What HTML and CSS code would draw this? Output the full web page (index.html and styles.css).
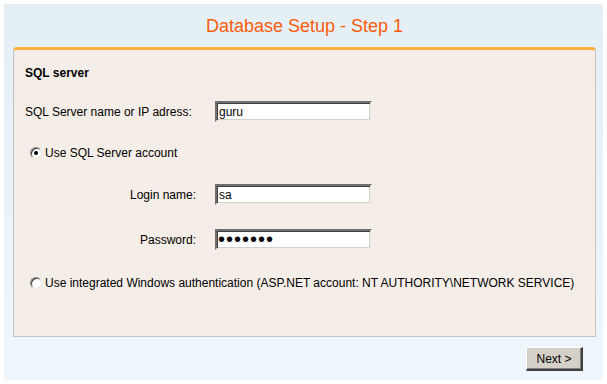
FILE: index.html
```html
<!DOCTYPE html>
<html lang="en">
<head>
  <meta charset="UTF-8" />
  <title>Database Setup - Step 1</title>
  <link rel="stylesheet" href="styles.css">
</head>
<body>
  <div class="wizard">
    <h1 class="wizard-title">Database Setup - Step 1</h1>

    <div class="panel">
      <h2 class="panel-title">SQL server</h2>

      <div class="form-row">
        <label class="field-label left" for="server">SQL Server name or IP adress:</label>
        <input class="field" type="text" id="server" value="guru" />
      </div>

      <label class="option">
        <input class="radio" type="radio" name="auth" checked />
        <span>Use SQL Server account</span>
      </label>

      <div class="form-row">
        <label class="field-label" for="login">Login name:</label>
        <input class="field" type="text" id="login" value="sa" />
      </div>

      <div class="form-row">
        <label class="field-label" for="pwd">Password:</label>
        <input class="field" type="password" id="pwd" value="1234567" />
      </div>

      <label class="option">
        <input class="radio" type="radio" name="auth" />
        <span>Use integrated Windows authentication (ASP.NET account: NT AUTHORITY\NETWORK SERVICE)</span>
      </label>
    </div>

    <div class="actions">
      <button class="btn">Next &gt;</button>
    </div>
  </div>
</body>
</html>
```

FILE: styles.css
```css
body {
  margin: 0;
  background: #fff;
  font-family: 'Liberation Sans', Arial, sans-serif;
  font-size: 12px;
  color: #000;
}

.wizard {
  margin: 4px 0 0 4px;
  width: 599px;
  height: 376px;
  background: linear-gradient(to bottom, #e5eff6, #eff6fe);
  box-sizing: border-box;
  padding: 0 7px 0 9px;
}

.wizard-title {
  margin: 0;
  height: 43px;
  line-height: 44px;
  text-align: center;
  font-size: 18px;
  font-weight: normal;
  color: #fa5c0a;
}

.panel {
  height: 290px;
  box-sizing: border-box;
  background: #f5ede7;
  border: 1px solid #c4c4c4;
  border-top: 3px solid #fbb03f;
  border-radius: 4px 4px 0 0;
  padding: 16px 11px 0 11px;
}

.panel-title {
  margin: 0 0 21px 0;
  font-size: 12px;
  line-height: 14px;
  font-weight: bold;
}

.form-row {
  display: grid;
  grid-template-columns: 171px 157px;
  column-gap: 19px;
  align-items: center;
  height: 21px;
  margin-bottom: 24px;
}

.field-label {
  text-align: right;
}

.field-label.left {
  text-align: left;
}

.field {
  box-sizing: border-box;
  width: 157px;
  height: 21px;
  margin: 0;
  padding: 1px 2px 0 2px;
  font-family: 'Liberation Sans', Arial, sans-serif;
  font-size: 12px;
  background: #fff;
  border-style: solid;
  border-width: 2px;
  border-color: #6f6f6f #f0ece6 #f0ece6 #6f6f6f;
  box-shadow: inset 1px 1px 0 #404040, inset -1px -1px 0 #d4d0c8;
  outline: none;
}

input[type="password"].field {
  font-size: 20px;
  line-height: 15px;
  letter-spacing: 1px;
  padding: 0 1px;
}

.option {
  display: flex;
  align-items: center;
  gap: 3px;
  margin: 0 0 24px 5px;
  height: 14px;
}

.radio {
  appearance: none;
  -webkit-appearance: none;
  width: 12px;
  height: 12px;
  margin: 0;
  border-radius: 50%;
  background: #fff;
  border: 1px solid;
  border-color: #808080 #e8e4de #e8e4de #808080;
  box-shadow: inset 1px 1px 0 #404040;
  position: relative;
}

.radio:checked::after {
  content: "";
  position: absolute;
  left: 3px;
  top: 3px;
  width: 4px;
  height: 4px;
  border-radius: 50%;
  background: #000;
}

.option:last-child {
  margin-top: 26px;
}

.actions {
  display: flex;
  justify-content: flex-end;
  padding: 10px 13px 0 0;
}

.btn {
  width: 57px;
  height: 24px;
  padding: 0;
  font-family: 'Liberation Sans', Arial, sans-serif;
  font-size: 12px;
  color: #000;
  background: #d4d0c8;
  border-style: solid;
  border-width: 1px 2px 2px 1px;
  border-color: #fff #404040 #404040 #fff;
  box-shadow: inset -1px -1px 0 #808080;
  cursor: pointer;
}
```
